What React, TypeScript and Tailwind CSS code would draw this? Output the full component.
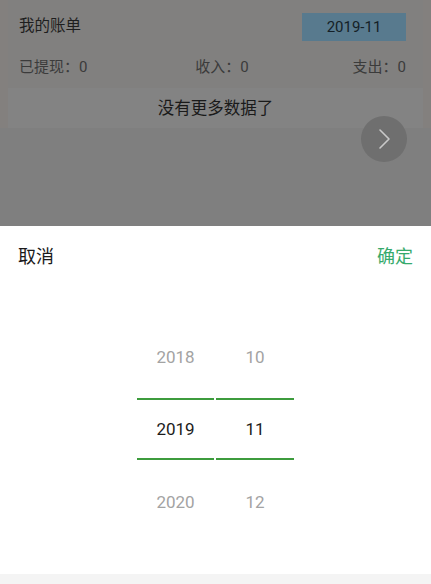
import React from "react"

const font = { fontFamily: 'Roboto, "Noto Sans CJK SC", sans-serif' }

const years = ["2018", "2019", "2020"]
const months = ["10", "11", "12"]

function PickerColumn({ items, width }: { items: string[]; width: string }) {
  return (
    <div className={`flex flex-col ${width}`}>
      <div className="h-[82px] pt-[2px] flex items-center justify-center text-[17px] text-[#a3a3a3]">{items[0]}</div>
      <div className="h-[2px] bg-[#3d9c3d]" />
      <div className="h-[58px] pt-[2px] flex items-center justify-center text-[17px] text-[#1c1c1c]">{items[1]}</div>
      <div className="h-[2px] bg-[#3d9c3d]" />
      <div className="h-[84px] pt-[1px] flex items-center justify-center text-[17px] text-[#a3a3a3]">{items[2]}</div>
    </div>
  )
}

export default function App() {
  return (
    <div className="w-[431px] h-[584px] flex flex-col overflow-hidden" style={font}>
      {/* dimmed page behind the picker */}
      <div className="relative h-[226px] bg-[#7f7f7f]">
        <div className="h-[128px] bg-[#81807f] border-l-[8px] border-r-[8px] border-[#83807e]">
          <div className="pt-[13px] pl-[11px] pr-[17px]">
            <div className="flex items-center justify-between h-[28px]">
              <span className="text-[15.5px] text-[#1e1e1e]">我的账单</span>
              <div className="w-[104px] h-[28px] bg-[#587a8e] flex items-center justify-center text-[15px] text-[#141f27]">
                2019-11
              </div>
            </div>
            <div className="mt-[14px] h-[24px] flex items-center justify-between text-[15px] text-[#3b3b3b]">
              <span>已提现：0</span>
              <span className="pl-[4px]">收入：0</span>
              <span>支出：0</span>
            </div>
          </div>
          <div className="mt-[9px] h-[40px] pt-[3px] bg-[#838383] flex items-center justify-center text-[16.5px] text-[#1a1a1a]">
            没有更多数据了
          </div>
        </div>
        <div className="absolute left-[361px] top-[116px] w-[46px] h-[46px] rounded-full bg-[#6f6f6f] flex items-center justify-center">
          <svg width="14" height="24" viewBox="0 0 14 24" fill="none">
            <path d="M3 3l9 9-9 9" stroke="#c9c9c9" strokeWidth="1.6" strokeLinecap="round" strokeLinejoin="round" />
          </svg>
        </div>
      </div>

      {/* bottom sheet */}
      <div className="flex-1 flex flex-col bg-white">
        <div className="h-[60px] flex items-center justify-between pl-[18px] pr-[18px]">
          <span className="text-[18px] text-[#1a1a1a]">取消</span>
          <span className="text-[18px] text-[#36aa6c]">确定</span>
        </div>
        <div className="pt-[30px] flex justify-center gap-[2px]">
          <PickerColumn items={years} width="w-[77px]" />
          <PickerColumn items={months} width="w-[78px]" />
        </div>
        <div className="flex-1" />
        <div className="h-[10px] bg-[#f4f4f4]" />
      </div>
    </div>
  )
}
